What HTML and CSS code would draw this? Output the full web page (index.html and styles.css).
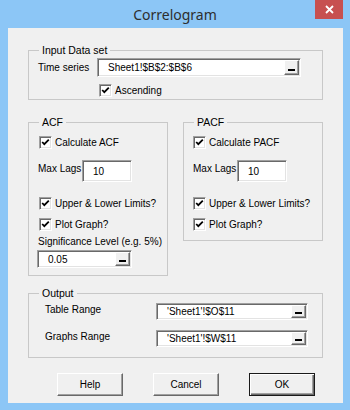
FILE: index.html
```html
<!DOCTYPE html>
<html lang="en">
<head>
    <meta charset="UTF-8">
    <title>Correlogram</title>
    <link rel="stylesheet" href="styles.css">
</head>
<body>
    <div class="window">
        <div class="titlebar">
            <span class="title">Correlogram</span>
            <button class="close">
                <svg width="9" height="9" viewBox="0 0 9 9"><path d="M1 1 L8 8 M8 1 L1 8" stroke="#fff" stroke-width="1.8"/></svg>
            </button>
        </div>

        <div class="client">
            <fieldset class="group group-input">
                <legend>Input Data set</legend>
                <div class="row">
                    <span class="lbl lbl-series">Time series</span>
                    <div class="refedit ref-series"><span class="val">Sheet1!$B$2:$B$6</span><span class="pick"></span></div>
                </div>
                <div class="check check-asc">
                    <span class="box"><svg width="9" height="9" viewBox="0 0 9 9"><polyline points="1.2,4 3.3,6.2 7.8,1.6" fill="none" stroke="#000" stroke-width="1.8"/></svg></span>
                    <span>Ascending</span>
                </div>
            </fieldset>

            <div class="columns">
                <fieldset class="group group-half group-acf">
                    <legend>ACF</legend>
                    <div class="check check-calc">
                        <span class="box"><svg width="9" height="9" viewBox="0 0 9 9"><polyline points="1.2,4 3.3,6.2 7.8,1.6" fill="none" stroke="#000" stroke-width="1.8"/></svg></span>
                        <span>Calculate ACF</span>
                    </div>
                    <div class="lags-row">
                        <span class="lbl lbl-lags">Max Lags</span>
                        <div class="refedit num"><span class="val">10</span></div>
                    </div>
                    <div class="check check-limits">
                        <span class="box"><svg width="9" height="9" viewBox="0 0 9 9"><polyline points="1.2,4 3.3,6.2 7.8,1.6" fill="none" stroke="#000" stroke-width="1.8"/></svg></span>
                        <span>Upper &amp; Lower Limits?</span>
                    </div>
                    <div class="check check-plot">
                        <span class="box"><svg width="9" height="9" viewBox="0 0 9 9"><polyline points="1.2,4 3.3,6.2 7.8,1.6" fill="none" stroke="#000" stroke-width="1.8"/></svg></span>
                        <span>Plot Graph?</span>
                    </div>
                    <div class="lbl lbl-sig">Significance Level (e.g. 5%)</div>
                    <div class="refedit ref-sig"><span class="val">0.05</span><span class="pick"></span></div>
                </fieldset>

                <fieldset class="group group-half group-pacf">
                    <legend>PACF</legend>
                    <div class="check check-calc">
                        <span class="box"><svg width="9" height="9" viewBox="0 0 9 9"><polyline points="1.2,4 3.3,6.2 7.8,1.6" fill="none" stroke="#000" stroke-width="1.8"/></svg></span>
                        <span>Calculate PACF</span>
                    </div>
                    <div class="lags-row">
                        <span class="lbl lbl-lags">Max Lags</span>
                        <div class="refedit num"><span class="val">10</span></div>
                    </div>
                    <div class="check check-limits">
                        <span class="box"><svg width="9" height="9" viewBox="0 0 9 9"><polyline points="1.2,4 3.3,6.2 7.8,1.6" fill="none" stroke="#000" stroke-width="1.8"/></svg></span>
                        <span>Upper &amp; Lower Limits?</span>
                    </div>
                    <div class="check check-plot">
                        <span class="box"><svg width="9" height="9" viewBox="0 0 9 9"><polyline points="1.2,4 3.3,6.2 7.8,1.6" fill="none" stroke="#000" stroke-width="1.8"/></svg></span>
                        <span>Plot Graph?</span>
                    </div>
                </fieldset>
            </div>

            <fieldset class="group group-output">
                <legend>Output</legend>
                <div class="row out-row out-table">
                    <span class="lbl lbl-out">Table Range</span>
                    <div class="refedit ref-out"><span class="val">'Sheet1'!$O$11</span><span class="pick"></span></div>
                </div>
                <div class="row out-row out-graphs">
                    <span class="lbl lbl-out">Graphs Range</span>
                    <div class="refedit ref-out"><span class="val">'Sheet1'!$W$11</span><span class="pick"></span></div>
                </div>
            </fieldset>

            <div class="buttons">
                <button class="btn">Help</button>
                <button class="btn">Cancel</button>
                <button class="btn btn-default">OK</button>
            </div>
        </div>
    </div>
</body>
</html>
```

FILE: styles.css
```css
body {
    margin: 0;
    font-family: "Liberation Sans", Arial, sans-serif;
    font-size: 10px;
    color: #000;
}

.window {
    width: 350px;
    height: 410px;
    background: #8cc6f6;
    display: flex;
    flex-direction: column;
}

/* title bar */
.titlebar {
    height: 28px;
    display: grid;
    grid-template-columns: 1fr auto 1fr;
    align-items: center;
}

.title {
    grid-column: 2;
    font-family: "Noto Sans", "Open Sans", sans-serif;
    font-size: 14px;
    color: #2e2e2e;
    padding-top: 1px;
}

.close {
    grid-column: 3;
    justify-self: end;
    align-self: start;
    width: 28px;
    height: 19px;
    margin-right: 7px;
    padding: 0;
    border: none;
    background: #c75050;
    display: flex;
    align-items: center;
    justify-content: center;
}

/* dialog body */
.client {
    margin: 0 7px 0 8px;
    height: 375px;
    box-sizing: border-box;
    background: #f0f0f0;
    padding: 16px 20px 0;
}

.group {
    margin: 0;
    padding: 0 0 0 9px;
    border: 1px solid #c8c8c8;
    box-sizing: border-box;
    min-width: 0;
}

.group legend {
    padding: 0 3px;
    margin-left: 1px;
    line-height: 13px;
    font-size: 10.5px;
}

.row {
    display: flex;
    align-items: center;
}

.lbl {
    line-height: 13px;
    white-space: nowrap;
}

/* sunken edit box */
.refedit {
    display: flex;
    align-items: center;
    box-sizing: border-box;
    background: #fff;
    border: 1px solid;
    border-color: #a0a0a0 #fff #fff #a0a0a0;
    box-shadow: inset 1px 1px #696969, inset -1px -1px #e3e3e3;
    padding-left: 10px;
}

.refedit .val {
    flex: 1;
    white-space: nowrap;
}

.pick {
    align-self: stretch;
    width: 15px;
    margin: 1px 1px 1px 0;
    box-sizing: border-box;
    background: #f0f0f0;
    border: 1px solid;
    border-color: #fff #696969 #696969 #fff;
    box-shadow: inset -1px -1px #a0a0a0;
    display: flex;
    align-items: flex-end;
    justify-content: center;
}

.pick::after {
    content: "";
    width: 7px;
    height: 2px;
    margin-bottom: 3px;
    background: #000;
}

/* checkbox */
.check {
    display: flex;
    align-items: center;
    gap: 3px;
    line-height: 13px;
    white-space: nowrap;
}

.box {
    width: 13px;
    height: 13px;
    box-sizing: border-box;
    background: #fff;
    border: 1px solid;
    border-color: #a0a0a0 #fff #fff #a0a0a0;
    box-shadow: inset 1px 1px #696969, inset -1px -1px #e3e3e3;
    display: flex;
    align-items: center;
    justify-content: center;
}

/* input data set */
.group-input {
    height: 56px;
    padding-top: 1px;
}

.lbl-series {
    width: 59px;
}

.ref-series {
    width: 204px;
    height: 19px;
}

.check-asc {
    margin: 7px 0 0 61px;
}

/* ACF / PACF */
.columns {
    display: flex;
    align-items: flex-start;
    gap: 15px;
    margin-top: 16px;
}

.group-half {
    width: 140px;
    padding-top: 7px;
}

.group-acf {
    height: 160px;
}

.group-pacf {
    height: 125px;
}

.group-acf .check {
    margin-left: 1px;
}

.lags-row {
    display: flex;
    margin-top: 11px;
}

.lbl-lags {
    width: 44px;
    margin-top: 2px;
}

.num {
    width: 50px;
    height: 22px;
}

.check-limits {
    margin-top: 15px;
}

.check-plot {
    margin-top: 8px;
}

.lbl-sig {
    margin-top: 4px;
}

.ref-sig {
    width: 95px;
    height: 18px;
    margin: 2px 0 0 -1px;
}

/* output */
.group-output {
    height: 71px;
    margin-top: 11px;
}

.out-row {
    margin-left: 7px;
}

.out-table {
    margin-top: 3px;
}

.out-graphs {
    margin-top: 10px;
}

.lbl-out {
    width: 111px;
    align-self: flex-start;
}

.ref-out {
    width: 152px;
    height: 17px;
}

/* buttons */
.buttons {
    display: flex;
    justify-content: flex-end;
    gap: 30px;
    margin-top: 15px;
    padding-right: 8px;
}

.btn {
    width: 66px;
    height: 23px;
    padding: 0;
    font: inherit;
    color: #000;
    background: #f0f0f0;
    border: 1px solid;
    border-color: #fff #696969 #696969 #fff;
    box-shadow: inset -1px -1px #a0a0a0;
}

.btn-default {
    border: 1px solid #1a1a1a;
    box-shadow: inset 1px 1px #fff, inset -1px -1px #696969, inset -2px -2px #a0a0a0;
}
```
